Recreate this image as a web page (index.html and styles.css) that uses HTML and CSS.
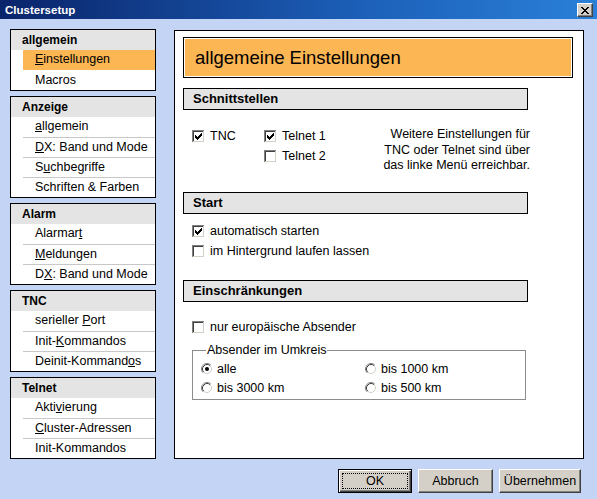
FILE: index.html
```html
<!DOCTYPE html>
<html lang="de">
<head>
<meta charset="utf-8">
<title>Clustersetup</title>
<link rel="stylesheet" href="styles.css">
</head>
<body>
<div class="window">
  <div class="titlebar">
    <span class="title">Clustersetup</span>
    <span class="close"><svg width="8" height="7" viewBox="0 0 8 7" shape-rendering="crispEdges"><path fill="#000" d="M0 0h2v1H0z M6 0h2v1H6z M1 1h2v1H1z M5 1h2v1H5z M2 2h4v1H2z M3 3h2v1H3z M2 4h4v1H2z M1 5h2v1H1z M5 5h2v1H5z M0 6h2v1H0z M6 6h2v1H6z"/></svg></span>
  </div>
  <div class="client">
    <div class="main">
      <nav class="nav">
        <div class="group">
          <div class="ghead">allgemein</div>
          <div class="item sel"><u>E</u>instellungen</div>
          <div class="item">Macros</div>
        </div>
        <div class="group">
          <div class="ghead">Anzeige</div>
          <div class="item"><u>a</u>llgemein</div>
          <div class="item"><u>D</u>X: Band und Mode</div>
          <div class="item">S<u>u</u>chbegriffe</div>
          <div class="item">Schriften &amp; Farben</div>
        </div>
        <div class="group">
          <div class="ghead">Alarm</div>
          <div class="item">Alarmar<u>t</u></div>
          <div class="item"><u>M</u>eldungen</div>
          <div class="item">D<u>X</u>: Band und Mode</div>
        </div>
        <div class="group">
          <div class="ghead">TNC</div>
          <div class="item">serieller <u>P</u>ort</div>
          <div class="item">Init-<u>K</u>ommandos</div>
          <div class="item">Deinit-Kommand<u>o</u>s</div>
        </div>
        <div class="group">
          <div class="ghead">Telnet</div>
          <div class="item">Akti<u>v</u>ierung</div>
          <div class="item"><u>C</u>luster-Adressen</div>
          <div class="item">Init-Kommandos</div>
        </div>
      </nav>

      <section class="panel">
        <div class="ptitle"><div class="ptitle-in">allgemeine Einstellungen</div></div>

        <div class="shead first">Schnittstellen</div>
        <div class="block iface">
          <div class="col col1">
            <div class="opt">
              <svg class="cbx" width="13" height="13" viewBox="0 0 13 13" shape-rendering="crispEdges"><rect width="13" height="13" fill="#fff"/><path fill="#808080" d="M0 0h12v1H1v11H0z"/><path fill="#fff" d="M12 0h1v13H0v-1h12z"/><path fill="#404040" d="M1 1h10v1H2v9H1z"/><path fill="#d4d0c8" d="M11 1h1v11H1v-1h10z"/><path fill="#000" d="M3 5h1v3H3z M4 6h1v3H4z M5 7h1v3H5z M6 6h1v3H6z M7 5h1v3H7z M8 4h1v3H8z M9 3h1v3H9z"/></svg>
              <span>TNC</span>
            </div>
          </div>
          <div class="col col2">
            <div class="opt">
              <svg class="cbx" width="13" height="13" viewBox="0 0 13 13" shape-rendering="crispEdges"><rect width="13" height="13" fill="#fff"/><path fill="#808080" d="M0 0h12v1H1v11H0z"/><path fill="#fff" d="M12 0h1v13H0v-1h12z"/><path fill="#404040" d="M1 1h10v1H2v9H1z"/><path fill="#d4d0c8" d="M11 1h1v11H1v-1h10z"/><path fill="#000" d="M3 5h1v3H3z M4 6h1v3H4z M5 7h1v3H5z M6 6h1v3H6z M7 5h1v3H7z M8 4h1v3H8z M9 3h1v3H9z"/></svg>
              <span>Telnet 1</span>
            </div>
            <div class="opt">
              <svg class="cbx" width="13" height="13" viewBox="0 0 13 13" shape-rendering="crispEdges"><rect width="13" height="13" fill="#fff"/><path fill="#808080" d="M0 0h12v1H1v11H0z"/><path fill="#fff" d="M12 0h1v13H0v-1h12z"/><path fill="#404040" d="M1 1h10v1H2v9H1z"/><path fill="#d4d0c8" d="M11 1h1v11H1v-1h10z"/></svg>
              <span>Telnet 2</span>
            </div>
          </div>
          <div class="note">Weitere Einstellungen für<br>TNC oder Telnet sind über<br>das linke Menü erreichbar.</div>
        </div>

        <div class="shead">Start</div>
        <div class="block start">
          <div class="opt">
            <svg class="cbx" width="13" height="13" viewBox="0 0 13 13" shape-rendering="crispEdges"><rect width="13" height="13" fill="#fff"/><path fill="#808080" d="M0 0h12v1H1v11H0z"/><path fill="#fff" d="M12 0h1v13H0v-1h12z"/><path fill="#404040" d="M1 1h10v1H2v9H1z"/><path fill="#d4d0c8" d="M11 1h1v11H1v-1h10z"/><path fill="#000" d="M3 5h1v3H3z M4 6h1v3H4z M5 7h1v3H5z M6 6h1v3H6z M7 5h1v3H7z M8 4h1v3H8z M9 3h1v3H9z"/></svg>
            <span>automatisch starten</span>
          </div>
          <div class="opt">
            <svg class="cbx" width="13" height="13" viewBox="0 0 13 13" shape-rendering="crispEdges"><rect width="13" height="13" fill="#fff"/><path fill="#808080" d="M0 0h12v1H1v11H0z"/><path fill="#fff" d="M12 0h1v13H0v-1h12z"/><path fill="#404040" d="M1 1h10v1H2v9H1z"/><path fill="#d4d0c8" d="M11 1h1v11H1v-1h10z"/></svg>
            <span>im Hintergrund laufen lassen</span>
          </div>
        </div>

        <div class="shead">Einschränkungen</div>
        <div class="block limits">
          <div class="opt">
            <svg class="cbx" width="13" height="13" viewBox="0 0 13 13" shape-rendering="crispEdges"><rect width="13" height="13" fill="#fff"/><path fill="#808080" d="M0 0h12v1H1v11H0z"/><path fill="#fff" d="M12 0h1v13H0v-1h12z"/><path fill="#404040" d="M1 1h10v1H2v9H1z"/><path fill="#d4d0c8" d="M11 1h1v11H1v-1h10z"/></svg>
            <span>nur europäische Absender</span>
          </div>
          <fieldset class="radius">
            <legend>Absender im Umkreis</legend>
            <div class="rgrid">
              <div class="ropt">
                <svg class="rad" width="12" height="12" viewBox="0 0 12 12"><circle cx="6" cy="6" r="5" fill="#fff"/><path d="M2.11 9.89A5.5 5.5 0 0 1 9.89 2.11" fill="none" stroke="#808080"/><path d="M9.89 2.11A5.5 5.5 0 0 1 2.11 9.89" fill="none" stroke="#fff"/><path d="M2.82 9.18A4.5 4.5 0 0 1 9.18 2.82" fill="none" stroke="#404040"/><path d="M9.18 2.82A4.5 4.5 0 0 1 2.82 9.18" fill="none" stroke="#d4d0c8"/><circle cx="6" cy="6" r="2" fill="#000"/></svg>
                <span>alle</span>
              </div>
              <div class="ropt">
                <svg class="rad" width="12" height="12" viewBox="0 0 12 12"><circle cx="6" cy="6" r="5" fill="#fff"/><path d="M2.11 9.89A5.5 5.5 0 0 1 9.89 2.11" fill="none" stroke="#808080"/><path d="M9.89 2.11A5.5 5.5 0 0 1 2.11 9.89" fill="none" stroke="#fff"/><path d="M2.82 9.18A4.5 4.5 0 0 1 9.18 2.82" fill="none" stroke="#404040"/><path d="M9.18 2.82A4.5 4.5 0 0 1 2.82 9.18" fill="none" stroke="#d4d0c8"/></svg>
                <span>bis 1000 km</span>
              </div>
              <div class="ropt">
                <svg class="rad" width="12" height="12" viewBox="0 0 12 12"><circle cx="6" cy="6" r="5" fill="#fff"/><path d="M2.11 9.89A5.5 5.5 0 0 1 9.89 2.11" fill="none" stroke="#808080"/><path d="M9.89 2.11A5.5 5.5 0 0 1 2.11 9.89" fill="none" stroke="#fff"/><path d="M2.82 9.18A4.5 4.5 0 0 1 9.18 2.82" fill="none" stroke="#404040"/><path d="M9.18 2.82A4.5 4.5 0 0 1 2.82 9.18" fill="none" stroke="#d4d0c8"/></svg>
                <span>bis 3000 km</span>
              </div>
              <div class="ropt">
                <svg class="rad" width="12" height="12" viewBox="0 0 12 12"><circle cx="6" cy="6" r="5" fill="#fff"/><path d="M2.11 9.89A5.5 5.5 0 0 1 9.89 2.11" fill="none" stroke="#808080"/><path d="M9.89 2.11A5.5 5.5 0 0 1 2.11 9.89" fill="none" stroke="#fff"/><path d="M2.82 9.18A4.5 4.5 0 0 1 9.18 2.82" fill="none" stroke="#404040"/><path d="M9.18 2.82A4.5 4.5 0 0 1 2.82 9.18" fill="none" stroke="#d4d0c8"/></svg>
                <span>bis 500 km</span>
              </div>
            </div>
          </fieldset>
        </div>
      </section>
    </div>

    <div class="buttons">
      <div class="btn default"><span class="focus">OK</span></div>
      <div class="btn w75">Abbruch</div>
      <div class="btn w82">Übernehmen</div>
    </div>
  </div>
</div>
</body>
</html>
```

FILE: styles.css
```css
* { box-sizing: border-box; }

html, body {
  margin: 0;
  padding: 0;
}

body {
  width: 597px;
  height: 499px;
  overflow: hidden;
  font-family: "Liberation Sans", Arial, sans-serif;
  font-size: 12.5px;
  color: #000;
  background: #c4d4f4;
}

.window {
  width: 597px;
  height: 499px;
  display: flex;
  flex-direction: column;
  background: #c4d4f4;
}

/* title bar */
.titlebar {
  height: 19px;
  flex: none;
  display: flex;
  align-items: center;
  justify-content: space-between;
  padding: 0 4px 0 5px;
  background: linear-gradient(to right, #0a246a 0%, #1c5fb8 60%, #2a80d8 100%);
  color: #fff;
}

.title {
  font-weight: bold;
  font-size: 11.5px;
}

.close {
  width: 16px;
  height: 14px;
  display: flex;
  align-items: center;
  justify-content: center;
  background: #d4d0c8;
  border: 1px solid;
  border-color: #fff #404040 #404040 #fff;
  box-shadow: inset -1px -1px #808080;
  margin-top: 1px;
}

/* client area */
.client {
  flex: 1;
  display: flex;
  flex-direction: column;
  padding: 10px 0 0 10px;
}

.main {
  display: flex;
  align-items: flex-start;
  gap: 18px;
}

/* navigation */
.nav {
  width: 146px;
  display: flex;
  flex-direction: column;
  gap: 5px;
}

.group {
  border: 1px solid #000;
  background: #fff;
}

.ghead {
  height: 20px;
  line-height: 20px;
  background: #e4e4e4;
  font-weight: bold;
  font-size: 12px;
  padding-left: 11px;
}

.item {
  height: 20px;
  line-height: 19px;
  margin-left: 12px;
  padding-left: 12px;
}

.item + .item {
  border-top: 1px solid #c8c8c8;
}

.item.sel {
  background: #fcb654;
}

.item.sel + .item {
  border-top-color: #fff;
}

/* right panel */
.panel {
  width: 410px;
  height: 429px;
  margin-top: 1px;
  border: 1px solid #000;
  background: #fff;
  padding: 6px 0 0 8px;
}

.ptitle {
  width: 390px;
  height: 41px;
  border: 1px solid #000;
  padding: 1px;
}

.ptitle-in {
  height: 100%;
  background: #fcb654;
  font-size: 18.5px;
  line-height: 37px;
  padding-left: 10px;
}

.shead {
  width: 345px;
  height: 22px;
  border: 1px solid #000;
  background: #e4e4e4;
  font-weight: bold;
  font-size: 13px;
  line-height: 20px;
  padding-left: 9px;
}

.shead.first {
  margin-top: 10px;
}

.block {
  padding-left: 9px;
}

.iface {
  height: 82px;
  padding-top: 16px;
  display: flex;
}

.col1 { width: 72px; }

.note {
  margin-left: auto;
  margin-right: 53px;
  margin-top: 1px;
  text-align: right;
  line-height: 15.5px;
}

.opt {
  height: 20px;
  display: flex;
  align-items: center;
  gap: 5px;
}

.cbx { flex: none; display: block; }

.start {
  height: 66px;
  padding-top: 7px;
}

.limits {
  padding-top: 15px;
}

.radius {
  width: 334px;
  height: 57px;
  margin: 6px 0 0 0;
  padding: 1px 0 0 8px;
  border: 1px solid #8c8c8c;
}

.radius legend {
  margin-left: 5px;
  padding: 0 1px;
  line-height: 15px;
}

.rgrid {
  display: grid;
  grid-template-columns: 164px 1fr;
  grid-auto-rows: 19px;
}

.ropt {
  display: flex;
  align-items: center;
  gap: 4px;
}

.rad { flex: none; display: block; }

/* buttons */
.buttons {
  display: flex;
  justify-content: flex-end;
  gap: 6px;
  padding-right: 16px;
  margin-top: 10px;
}

.btn {
  width: 75px;
  height: 24px;
  display: flex;
  align-items: center;
  justify-content: center;
  background: #d4d0c8;
  border: 1px solid;
  border-color: #fff #404040 #404040 #fff;
  box-shadow: inset -1px -1px #808080;
}

.btn.w82 { width: 82px; }

.btn.default {
  width: 74px;
  border: 1px solid #000;
  box-shadow: inset 1px 1px #fff, inset -1px -1px #404040, inset -2px -2px #808080;
  padding: 3px;
}

.focus {
  flex: 1;
  align-self: stretch;
  display: flex;
  align-items: center;
  justify-content: center;
  border: 1px dotted #000;
}
```
